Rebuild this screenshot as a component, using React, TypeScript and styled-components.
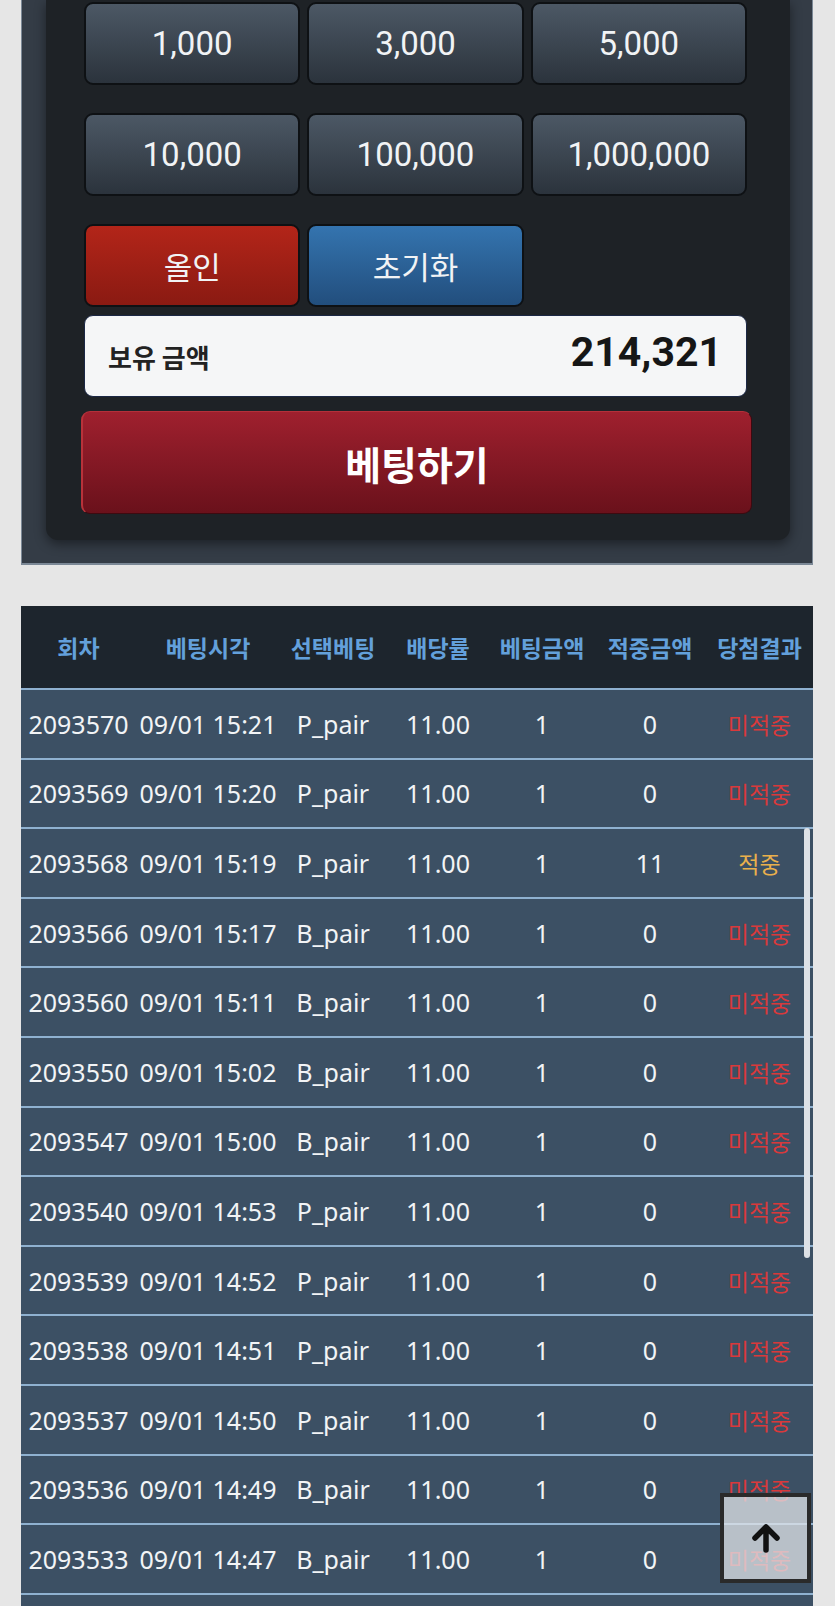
import styled, { createGlobalStyle } from 'styled-components';

const GlobalStyle = createGlobalStyle`
  html, body {
    margin: 0;
    padding: 0;
    background: #e6e6e6;
  }
  body {
    font-family: 'Noto Sans', 'Noto Sans CJK KR', sans-serif;
  }
`;

const Page = styled.div`
  padding: 0 22px 0 21px;
`;

const Panel = styled.section`
  background: #343c46;
  border: solid #7b8896;
  border-width: 0 1px 2px 1px;
  padding: 0 22px 23px 24px;
`;

const Card = styled.div`
  background: #1e2226;
  border-radius: 0 0 12px 12px;
  box-shadow: 0 4px 12px rgba(0, 0, 0, 0.45);
  padding: 2px 43px 26px 38px;
`;

const ChipGrid = styled.div`
  display: grid;
  grid-template-columns: repeat(3, 1fr);
  column-gap: 7px;
  row-gap: 28px;
`;

const tones = {
  chip: 'linear-gradient(180deg, #4c5865 0%, #2b333c 100%)',
  red: 'linear-gradient(180deg, #b32519 0%, #8a1a12 100%)',
  blue: 'linear-gradient(180deg, #3474af 0%, #224e7d 100%)',
};

const ChipButton = styled.button<{ $tone: keyof typeof tones }>`
  height: 83px;
  box-sizing: border-box;
  border: 2px solid #0e1114;
  border-radius: 9px;
  background: ${({ $tone }) => tones[$tone]};
  color: #f1f3f5;
  font-family: ${({ $tone }) =>
    $tone === 'chip' ? "Roboto, 'Noto Sans', sans-serif" : "'Noto Sans CJK KR', sans-serif"};
  font-size: ${({ $tone }) => ($tone === 'chip' ? '33px' : '31px')};
  padding: 0;
  cursor: pointer;
`;

const Balance = styled.div`
  margin-top: 8px;
  height: 82px;
  box-sizing: border-box;
  background: #f5f6f7;
  border: 1px solid #1b2744;
  border-radius: 9px;
  display: flex;
  align-items: center;
  justify-content: space-between;
  padding: 0 24px 0 23px;
`;

const BalanceLabel = styled.span`
  font-family: 'Noto Sans CJK KR', sans-serif;
  font-weight: 700;
  font-size: 26px;
  color: #222;
`;

const BalanceValue = styled.span`
  font-family: Roboto, sans-serif;
  font-weight: 700;
  font-size: 41px;
  color: #161616;
  margin-top: -8px;
`;

const BetButton = styled.button`
  display: block;
  width: calc(100% + 8px);
  margin: 14px -5px 0 -3px;
  height: 103px;
  box-sizing: border-box;
  border: 1px solid #3d0a10;
  border-left: 2px solid #b8323a;
  border-top: 1px solid #b4303a;
  border-radius: 9px;
  background: linear-gradient(180deg, #9f202e 0%, #6a111b 100%);
  color: #fff;
  font-family: 'Noto Sans CJK KR', sans-serif;
  font-weight: 700;
  font-size: 39px;
  padding: 0;
  cursor: pointer;
`;

const TableSection = styled.div`
  position: relative;
  margin-top: 41px;
  padding-bottom: 24px;
  background: #3c5064;
`;

const columns = '115px 144px 106px 104px 104px 112px 1fr';

const HeadRow = styled.div`
  display: grid;
  grid-template-columns: ${columns};
  align-items: center;
  height: 82px;
  background: #1d252d;
`;

const HeadCell = styled.div`
  text-align: center;
  white-space: nowrap;
  font-family: 'Noto Sans CJK KR', sans-serif;
  font-weight: 700;
  font-size: 23px;
  color: #63a0db;
`;

const Row = styled.div<{ $last: boolean }>`
  display: grid;
  grid-template-columns: ${columns};
  align-items: center;
  height: 67.6px;
  border-top: 2px solid #8fb1d0;
  border-bottom: ${({ $last }) => ($last ? '2px solid #8fb1d0' : '0')};
  background: #3c5064;
`;

const Cell = styled.div`
  text-align: center;
  white-space: nowrap;
  font-size: 25px;
  color: #f2f4f6;
`;

const ResultCell = styled.div<{ $hit: boolean }>`
  text-align: center;
  white-space: nowrap;
  font-family: 'Noto Sans CJK KR', sans-serif;
  font-size: 23px;
  color: ${({ $hit }) => ($hit ? '#eab04c' : '#d9393b')};
`;

const ScrollThumb = styled.div`
  position: absolute;
  right: 3px;
  top: 222px;
  width: 6px;
  height: 430px;
  border-radius: 3px;
  background: #dde1e6;
`;

const TopButton = styled.button`
  position: fixed;
  right: 24px;
  bottom: 23px;
  width: 91px;
  height: 90px;
  box-sizing: border-box;
  border: 4px solid #2a2a2a;
  background: rgba(223, 227, 231, 0.76);
  display: flex;
  align-items: center;
  justify-content: center;
  padding: 0;
  cursor: pointer;
`;

const headers = ['회차', '베팅시각', '선택베팅', '배당률', '베팅금액', '적중금액', '당첨결과'];

const bets = [
  ['2093570', '09/01 15:21', 'P_pair', '0'],
  ['2093569', '09/01 15:20', 'P_pair', '0'],
  ['2093568', '09/01 15:19', 'P_pair', '11'],
  ['2093566', '09/01 15:17', 'B_pair', '0'],
  ['2093560', '09/01 15:11', 'B_pair', '0'],
  ['2093550', '09/01 15:02', 'B_pair', '0'],
  ['2093547', '09/01 15:00', 'B_pair', '0'],
  ['2093540', '09/01 14:53', 'P_pair', '0'],
  ['2093539', '09/01 14:52', 'P_pair', '0'],
  ['2093538', '09/01 14:51', 'P_pair', '0'],
  ['2093537', '09/01 14:50', 'P_pair', '0'],
  ['2093536', '09/01 14:49', 'B_pair', '0'],
  ['2093533', '09/01 14:47', 'B_pair', '0'],
];

const chips = ['1,000', '3,000', '5,000', '10,000', '100,000', '1,000,000'];

export default function App() {
  return (
    <>
      <GlobalStyle />
      <Page>
        <Panel>
          <Card>
            <ChipGrid>
              {chips.map((c) => (
                <ChipButton key={c} $tone="chip">
                  {c}
                </ChipButton>
              ))}
              <ChipButton $tone="red">올인</ChipButton>
              <ChipButton $tone="blue">초기화</ChipButton>
            </ChipGrid>
            <Balance>
              <BalanceLabel>보유 금액</BalanceLabel>
              <BalanceValue>214,321</BalanceValue>
            </Balance>
            <BetButton>베팅하기</BetButton>
          </Card>
        </Panel>

        <TableSection>
          <HeadRow>
            {headers.map((h) => (
              <HeadCell key={h}>{h}</HeadCell>
            ))}
          </HeadRow>
          {bets.map(([round, time, pick, win], i) => (
            <Row key={round} $last={i === bets.length - 1}>
              <Cell>{round}</Cell>
              <Cell>{time}</Cell>
              <Cell>{pick}</Cell>
              <Cell>11.00</Cell>
              <Cell>1</Cell>
              <Cell>{win}</Cell>
              <ResultCell $hit={win !== '0'}>{win !== '0' ? '적중' : '미적중'}</ResultCell>
            </Row>
          ))}
          <ScrollThumb />
        </TableSection>
      </Page>

      <TopButton aria-label="맨 위로">
        <svg width="32" height="32" viewBox="0 0 32 32" fill="none">
          <path
            d="M16 28V6M5 16L16 5l11 11"
            stroke="#111"
            strokeWidth="5.5"
            strokeLinecap="round"
            strokeLinejoin="round"
          />
        </svg>
      </TopButton>
    </>
  );
}
